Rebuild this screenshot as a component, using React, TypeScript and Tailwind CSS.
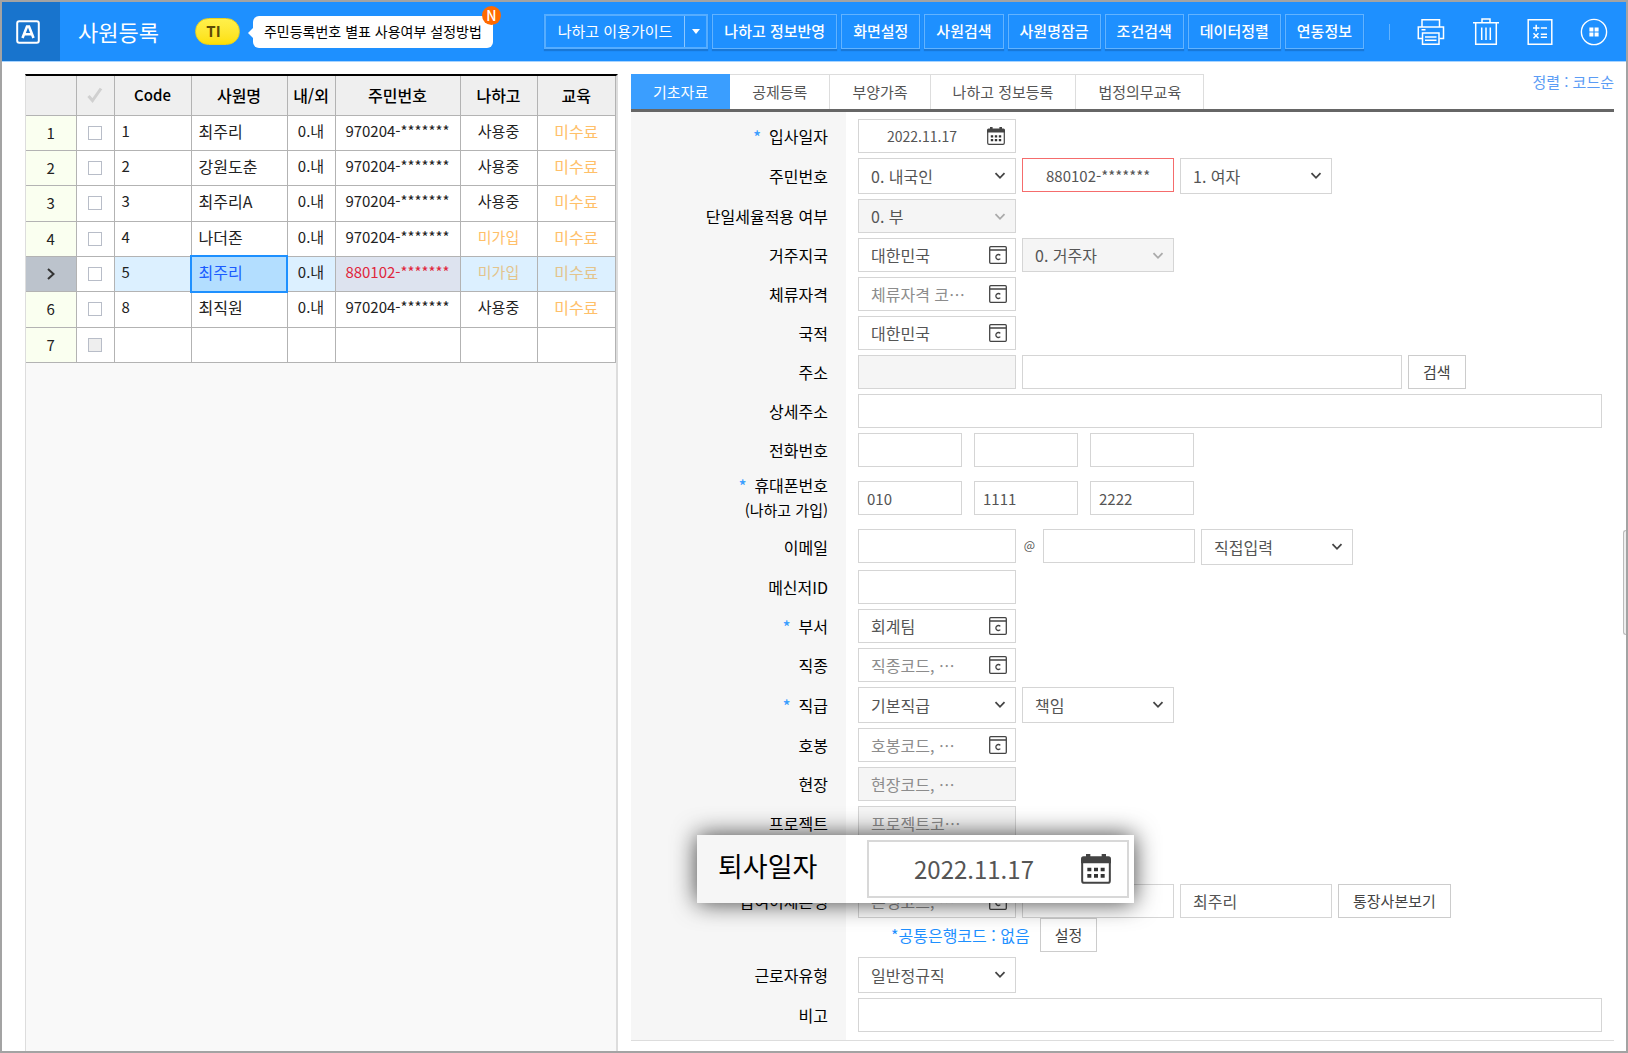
import { ReactNode } from "react";

type Employee = {
  no: number;
  code: string;
  name: string;
  nation: string;
  regNo: string;
  nahago: string;
  edu: string;
};

const employees: Employee[] = [
  { no: 1, code: "1", name: "최주리", nation: "0.내", regNo: "970204-*******", nahago: "사용중", edu: "미수료" },
  { no: 2, code: "2", name: "강원도춘", nation: "0.내", regNo: "970204-*******", nahago: "사용중", edu: "미수료" },
  { no: 3, code: "3", name: "최주리A", nation: "0.내", regNo: "970204-*******", nahago: "사용중", edu: "미수료" },
  { no: 4, code: "4", name: "나더존", nation: "0.내", regNo: "970204-*******", nahago: "미가입", edu: "미수료" },
  { no: 5, code: "5", name: "최주리", nation: "0.내", regNo: "880102-*******", nahago: "미가입", edu: "미수료" },
  { no: 6, code: "8", name: "최직원", nation: "0.내", regNo: "970204-*******", nahago: "사용중", edu: "미수료" },
  { no: 7, code: "", name: "", nation: "", regNo: "", nahago: "", edu: "" },
];

const selectedNo = 5;

const toolbar = [
  "나하고 정보반영",
  "화면설정",
  "사원검색",
  "사원명잠금",
  "조건검색",
  "데이터정렬",
  "연동정보",
];

const tabs = ["기초자료", "공제등록", "부양가족", "나하고 정보등록", "법정의무교육"];

function PrinterIcon() {
  return (
    <svg width="28" height="28" viewBox="0 0 28 28" fill="none" stroke="white" strokeWidth="1.5">
      <path d="M5 8.5V1.8h17.500v6.700M5 20.500H1.300V9h25.200v11.500H22.500" />
      <path d="M5.500 15h16.500v11.200H5.500zM8 19h11.500M8 22.200h11.500M4.500 11.800h4" />
    </svg>
  );
}

function TrashIcon() {
  return (
    <svg width="28" height="28" viewBox="0 0 28 28" fill="none" stroke="white" strokeWidth="1.5">
      <path d="M1 4.700h26M10 4.500V1h8v3.500M3.700 5v21.200h20.600V5M9.700 9.500v12.500M14 9.500v12.500M18.300 9.500v12.500" />
    </svg>
  );
}

function CalcIcon() {
  return (
    <svg width="26" height="28" viewBox="0 0 26 28" fill="none" stroke="white" strokeWidth="1.5">
      <path d="M1.200 1.800h23.600v24.400H1.200z" />
      <path d="M6 10h6.500M9.200 6.800v6.400M13.800 10h6.200M6.500 15.200l5 5M11.500 15.200l-5 5M13.800 16.300h6.200M13.800 19.300h6.200" />
    </svg>
  );
}

function MoreIcon() {
  return (
    <svg width="28" height="28" viewBox="0 0 28 28" fill="none">
      <circle cx="14" cy="14" r="12.6" stroke="white" strokeWidth="1.4" />
      <path
        fill="white"
        d="M9.400 9.400h4v4h-4zM14.600 9.400h4v4h-4zM9.400 14.600h4v4h-4zM14.600 14.600h4v4h-4z"
      />
    </svg>
  );
}

function CalendarIcon({ className }: { className: string }) {
  return (
    <svg className={className} viewBox="0 0 18 18" fill="none">
      <path fill="#444" d="M3 0h2.6v1.4h6.8V0H15v1.4h1.5Q18 1.4 18 3v2.6H0V3q0-1.600 1.500-1.600H3z" />
      <path stroke="#444" strokeWidth="1.2" d="M.7 4v12q0 1.3 1.300 1.300h14q1.300 0 1.300-1.300V4" />
      <path
        fill="#333"
        d="M3.800 8.200h2.400v2.200H3.800zM7.800 8.200h2.400v2.200H7.800zM11.800 8.200h2.400v2.200h-2.400zM3.800 12h2.400v2.200H3.800zM7.800 12h2.400v2.200H7.800zM11.800 12h2.400v2.200h-2.400z"
      />
    </svg>
  );
}

function CodeIcon() {
  return (
    <svg width="18" height="18" viewBox="0 0 18 18" fill="none" stroke="#444" strokeWidth="1.3">
      <rect x="0.7" y="0.7" width="16.6" height="16.6" rx="1" />
      <path d="M1 4h16M11.300 9.400a2.500 2.500 0 1 0 0 3.200" />
    </svg>
  );
}

function Row({ label, id, required, note, tight, children }: {
  label?: string;
  id?: string;
  required?: boolean;
  note?: string;
  tight?: boolean;
  children: ReactNode;
}) {
  const pad = tight ? "" : "pb-[5px]";
  return (
    <div className="flex">
      <div
        className={`flex w-[215px] shrink-0 flex-col items-end justify-center bg-[#f6f6f6] pr-[18px] text-black ${pad}`}
      >
        {label && (
          <label htmlFor={id} className="flex gap-2 text-[16px] leading-[24px]">
            {required && <span className="font-medium text-[#3a9eff]">*</span>}
            {label}
          </label>
        )}
        {note && <span className="text-[15px] leading-[26px]">{note}</span>}
      </div>
      <div className={`flex min-w-0 flex-1 gap-[6px] pr-[12px] pl-[12px] ${pad}`}>{children}</div>
    </div>
  );
}

function Field({ id, label, value, disabled, className = "w-[158px]" }: {
  id?: string;
  label?: string;
  value?: string;
  disabled?: boolean;
  className?: string;
}) {
  return (
    <input
      id={id}
      aria-label={label}
      defaultValue={value}
      disabled={disabled}
      className={`h-[34px] border border-[#d5d5d5] bg-white pl-3 text-[#555] disabled:bg-[#f5f5f5] ${className}`}
    />
  );
}

function CodeField({ id, value, placeholder, disabled }: {
  id: string;
  value?: string;
  placeholder?: string;
  disabled?: boolean;
}) {
  return (
    <div
      className={`flex h-[34px] w-[158px] items-center border border-[#d5d5d5] pr-2 pl-3 text-[16px] ${
        disabled ? "bg-[#f5f5f5]" : "bg-white"
      }`}
    >
      <input
        id={id}
        defaultValue={value}
        placeholder={placeholder}
        disabled={disabled}
        className="min-w-0 flex-1 text-[#555] placeholder:text-[#8c8c8c]"
      />
      {!disabled && (
        <button type="button" aria-label="코드 검색">
          <CodeIcon />
        </button>
      )}
    </div>
  );
}

function Select({ id, label, value, disabled, wide }: {
  id?: string;
  label?: string;
  value: string;
  disabled?: boolean;
  wide?: boolean;
}) {
  return (
    <div className={`relative ${wide ? "w-[158px]" : "w-[152px]"}`}>
      <select
        id={id}
        aria-label={label}
        disabled={disabled}
        className="block h-[36px] w-full appearance-none border border-[#d5d5d5] bg-white pl-3 text-[16px] text-[#555] opacity-100 disabled:h-[34px] disabled:bg-[#f5f5f5]"
      >
        <option>{value}</option>
      </select>
      <svg
        className="pointer-events-none absolute top-[14px] right-[10px]"
        width="12"
        height="8"
        viewBox="0 0 12 8"
        fill="none"
        stroke={disabled ? "#aaa" : "#444"}
        strokeWidth="1.8"
      >
        <path d="M1.500 1.200 6 5.800l4.500-4.600" />
      </svg>
    </div>
  );
}

function SmallButton({ children }: { children: ReactNode }) {
  return (
    <button type="button" className="h-[34px] border border-[#ccc] bg-white px-[14px] text-[15px] text-[#444]">
      {children}
    </button>
  );
}

function Header() {
  return (
    <header className="flex h-[60px] items-center border-b border-[#a8d4ff] bg-[#1e90ff] text-white">
      <div className="flex h-full w-[58px] items-center justify-center bg-[#1874cd] pr-[6px]">
        <svg width="24" height="24" viewBox="0 0 24 24" fill="none" stroke="white">
          <rect x="1.2" y="1.2" width="21.6" height="21.6" rx="2" strokeWidth="2" />
          <path strokeWidth="2.6" d="M6.500 18 11 6.500h2L17.500 18M8.300 14.300h7.400" />
        </svg>
      </div>
      <h1 className="ml-[18px] text-[22px]">사원등록</h1>
      <span className="ml-[36px] flex h-[27px] w-[45px] items-center justify-center rounded-full border border-[#e8cf20] bg-linear-to-b from-[#fff04a] to-[#fde000] pr-2 text-[15px] font-bold text-[#5c4a05]">
        TI
      </span>
      <div className="relative ml-[13px] flex h-8 items-center rounded-md bg-white px-[11px] text-[14px] text-black">
        <svg className="absolute top-[11px] -left-[5px]" width="6" height="12" viewBox="0 0 6 12" fill="white">
          <path d="M6 0v12L0 6z" />
        </svg>
        주민등록번호 별표 사용여부 설정방법
        <span className="absolute -top-[10px] -right-[8px] flex size-[19px] items-center justify-center rounded-full bg-[#ff6a00] text-[14px] font-medium text-white">
          N
        </span>
      </div>
      <div className="ml-auto flex gap-1 text-[15px] font-medium">
        <div className="flex h-[35px] border-2 border-[#56adff] font-normal shadow-[0_2px_1px_#1878d8]">
          <button type="button" className="px-3">나하고 이용가이드</button>
          <button
            type="button"
            aria-label="가이드 메뉴"
            className="flex w-[22px] items-center justify-center border-l border-[#8cc7ff]"
          >
            <svg width="8" height="5" viewBox="0 0 8 5" fill="white">
              <path d="M0 0h8L4 5z" />
            </svg>
          </button>
        </div>
        {toolbar.map((item) => (
          <button
            key={item}
            type="button"
            className="h-[35px] border border-[#62b3ff] px-[11px] shadow-[0_2px_1px_#1878d8]"
          >
            {item}
          </button>
        ))}
      </div>
      <div className="mr-[18px] ml-[25px] flex items-center gap-[27px]">
        <span className="h-4 w-px bg-[#62b3ff]" />
        <button type="button" aria-label="인쇄"><PrinterIcon /></button>
        <button type="button" aria-label="삭제"><TrashIcon /></button>
        <button type="button" aria-label="계산기"><CalcIcon /></button>
        <button type="button" aria-label="더보기"><MoreIcon /></button>
      </div>
    </header>
  );
}

function EmployeeTable() {
  return (
    <section className="w-[593px] shrink-0 border-t-2 border-r-2 border-l border-t-black border-r-[#ddd] border-l-[#ddd] bg-[#f9f9f9]">
      <table className="h-[287px] w-full table-fixed border-collapse text-[16px] text-[#222] [&_td]:border [&_td]:border-[#b3b3b3] [&_td:first-child]:border-l-0 [&_th]:border [&_th]:border-t-0 [&_th]:border-[#b3b3b3] [&_th:first-child]:border-l-0">
        <colgroup>
          <col className="w-[50px]" />
          <col className="w-[38px]" />
          <col className="w-[77px]" />
          <col className="w-[96px]" />
          <col className="w-[48px]" />
          <col className="w-[125px]" />
          <col className="w-[77px]" />
          <col />
        </colgroup>
        <thead>
          <tr className="h-[39px] bg-[#efefef] text-black [&>th]:font-medium">
            <th />
            <th>
              <svg className="mx-auto" width="16" height="16" viewBox="0 0 16 16" fill="none" stroke="#d0d0d0" strokeWidth="3">
                <path d="m1.500 9 4 4.500L14 1.500" />
              </svg>
            </th>
            <th className="text-[15px]">Code</th>
            <th>사원명</th>
            <th>내/외</th>
            <th>주민번호</th>
            <th>나하고</th>
            <th>교육</th>
          </tr>
        </thead>
        <tbody>
          {employees.map((e) => {
            const selected = e.no === selectedNo;
            return (
              <tr
                key={e.no}
                className={`h-[35px] leading-[24px] [&>td:nth-child(n+3)]:pb-1 ${selected ? "bg-[#dcf0ff]" : "bg-white"}`}
              >
                <td className={`text-center text-[15px] ${selected ? "bg-[#bcc3cc]" : "bg-[#fafff0]"}`}>
                  {selected ? (
                    <svg className="mx-auto" width="10" height="12" viewBox="0 0 10 12" fill="none" stroke="#333" strokeWidth="2">
                      <path d="m2 1 5.500 5L2 11" />
                    </svg>
                  ) : (
                    e.no
                  )}
                </td>
                <td className="bg-white">
                  <input
                    type="checkbox"
                    aria-label={`${e.no}행 선택`}
                    disabled={!e.code}
                    className="mx-auto block size-[14px] appearance-none border border-[#b8bdc8] bg-white disabled:bg-[#eee]"
                  />
                </td>
                <td className="pl-[7px] text-[15px]">{e.code}</td>
                <td
                  className={`pl-[7px] ${
                    selected ? "bg-[#b3deff] text-[#1a5cff] outline-2 -outline-offset-1 outline-[#1e90ff]" : ""
                  }`}
                >
                  {e.name}
                </td>
                <td className="text-center text-[15px]">{e.nation}</td>
                <td className={`text-center text-[15px] ${selected ? "bg-[#dde3ef] text-[#e0263c]" : ""}`}>{e.regNo}</td>
                <td
                  className={`text-center text-[15px] ${
                    e.nahago !== "미가입" ? "" : selected ? "text-[#e3c48c]" : "text-[#ffc069]"
                  }`}
                >
                  {e.nahago}
                </td>
                <td className={`text-center ${selected ? "text-[#e3c48c]" : "text-[#ffc069]"}`}>{e.edu}</td>
              </tr>
            );
          })}
        </tbody>
      </table>
    </section>
  );
}

function EmployeeForm() {
  return (
    <form className="border-b border-[#ddd] text-[15px]">
      <div className="flex h-[7px]">
        <div className="w-[215px] bg-[#f6f6f6]" />
      </div>
      <Row label="입사일자" id="joinDate" required>
        <div className="flex h-[34px] w-[158px] items-center border border-[#d5d5d5] pr-[10px] pl-[28px]">
          <input id="joinDate" defaultValue="2022.11.17" className="min-w-0 flex-1 text-[14px] text-[#555]" />
          <button type="button" aria-label="달력">
            <CalendarIcon className="size-[18px]" />
          </button>
        </div>
      </Row>
      <Row label="주민번호" id="nation">
        <Select id="nation" value="0. 내국인" wide />
        <Field label="주민등록번호" value="880102-*******" className="w-[152px] border-[#f56c6c] pl-[23px]" />
        <Select label="성별" value="1. 여자" />
      </Row>
      <Row label="단일세율적용 여부" id="flatTax">
        <Select id="flatTax" value="0. 부" disabled wide />
      </Row>
      <Row label="거주지국" id="country">
        <CodeField id="country" value="대한민국" />
        <Select label="거주구분" value="0. 거주자" disabled />
      </Row>
      <Row label="체류자격" id="visa">
        <CodeField id="visa" placeholder="체류자격 코⋯" />
      </Row>
      <Row label="국적" id="nationality">
        <CodeField id="nationality" value="대한민국" />
      </Row>
      <Row label="주소" id="zip">
        <Field id="zip" disabled />
        <Field label="주소" className="w-[380px]" />
        <SmallButton>검색</SmallButton>
      </Row>
      <Row label="상세주소" id="address2">
        <Field id="address2" className="min-w-0 flex-1" />
      </Row>
      <Row label="전화번호" id="tel1">
        <div className="flex gap-3">
          <Field id="tel1" className="w-[104px]" />
          <Field label="전화번호 가운데" className="w-[104px]" />
          <Field label="전화번호 끝" className="w-[104px]" />
        </div>
      </Row>
      <Row label="휴대폰번호" id="mobile1" required note="(나하고 가입)">
        <div className="flex h-[52px] items-center gap-3">
          <Field id="mobile1" value="010" className="w-[104px] pl-[8px]" />
          <Field label="휴대폰번호 가운데" value="1111" className="w-[104px] pl-[8px]" />
          <Field label="휴대폰번호 끝" value="2222" className="w-[104px] pl-[8px]" />
        </div>
      </Row>
      <Row label="이메일" id="email">
        <Field id="email" />
        <span className="w-[15px] text-center text-[12px] leading-[32px] text-[#555]">@</span>
        <Field label="이메일 도메인" className="w-[152px]" />
        <Select label="도메인 선택" value="직접입력" />
      </Row>
      <Row label="메신저ID" id="messenger">
        <Field id="messenger" />
      </Row>
      <Row label="부서" id="dept" required>
        <CodeField id="dept" value="회계팀" />
      </Row>
      <Row label="직종" id="job">
        <CodeField id="job" placeholder="직종코드, ⋯" />
      </Row>
      <Row label="직급" id="rank" required>
        <Select id="rank" value="기본직급" wide />
        <Select label="세부직급" value="책임" />
      </Row>
      <Row label="호봉" id="payStep">
        <CodeField id="payStep" placeholder="호봉코드, ⋯" />
      </Row>
      <Row label="현장" id="site">
        <CodeField id="site" placeholder="현장코드, ⋯" disabled />
      </Row>
      <Row label="프로젝트" id="project">
        <CodeField id="project" placeholder="프로젝트코⋯" disabled />
      </Row>
      <div className="relative z-10">
        <Row>
          <div className="h-[34px]" />
        </Row>
        {/* enlarged leave date row, floats over its neighbours */}
        <div className="absolute -top-[10px] left-[66px] flex h-[68px] w-[437px] items-center bg-white shadow-[0_0_24px_rgba(0,0,0,0.75)]">
          <label
            htmlFor="leaveDate"
            className="flex h-full w-[149px] items-center bg-[#f6f6f6] pb-[6px] pl-[21px] text-[27px] text-black"
          >
            퇴사일자
          </label>
          <div className="ml-[21px] flex h-[58px] w-[262px] items-center border-2 border-[#d8d8d8] pr-[16px] pl-[45px]">
            <input id="leaveDate" defaultValue="2022.11.17" className="min-w-0 flex-1 text-[24px] text-[#555]" />
            <button type="button" aria-label="달력">
              <CalendarIcon className="size-[30px]" />
            </button>
          </div>
        </div>
      </div>
      <Row label="급여이체은행" id="bank" tight>
        <CodeField id="bank" placeholder="은행코드, ⋯" />
        <Field label="계좌번호" className="w-[152px]" />
        <Field label="예금주" value="최주리" className="w-[152px] text-[16px]" />
        <SmallButton>통장사본보기</SmallButton>
      </Row>
      <Row>
        <div className="flex items-center gap-[10px] pl-[33px]">
          <span className="text-[16px] text-[#1e90ff]">*공통은행코드 : 없음</span>
          <SmallButton>설정</SmallButton>
        </div>
      </Row>
      <Row label="근로자유형" id="workerType">
        <Select id="workerType" value="일반정규직" wide />
      </Row>
      <Row label="비고" id="memo">
        <Field id="memo" className="min-w-0 flex-1" />
      </Row>
      <div className="h-[3px] w-[215px] bg-[#f6f6f6]" />
    </form>
  );
}

export default function App() {
  return (
    <div
      lang="ko"
      className="relative flex min-h-screen flex-col border-2 border-[#a3a3a3] bg-white font-['Noto_Sans_CJK_KR',sans-serif]"
    >
      <Header />
      <main className="flex flex-1 gap-[13px] pt-[12px] pr-[12px] pl-[23px]">
        <EmployeeTable />
        <section className="min-w-0 flex-1">
          <div className="flex items-start justify-between border-b-3 border-[#666]">
            <nav className="flex h-[35px] text-[15px] text-[#555]">
              {tabs.map((tab, i) => (
                <button
                  key={tab}
                  type="button"
                  className={
                    i === 0
                      ? "border-t border-[#3a9eff] bg-[#3a9eff] px-[22px] text-white"
                      : "border-t border-r border-[#ddd] px-[22px]"
                  }
                >
                  {tab}
                </button>
              ))}
            </nav>
            <a href="#sort" className="text-[15px] leading-[16px] text-[#5b9cf5]">정렬 : 코드순</a>
          </div>
          <EmployeeForm />
        </section>
      </main>
      {/* collapsed side panel handle */}
      <div className="absolute top-[528px] right-0 h-[105px] w-[3px] rounded-l-sm border border-r-0 border-[#bbb] bg-[#eee]" />
    </div>
  );
}
